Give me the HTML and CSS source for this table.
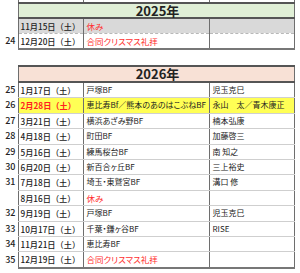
FILE: index.html
```html
<!DOCTYPE html>
<html lang="ja">
<head>
<meta charset="utf-8">
<link rel="stylesheet" href="styles.css">
</head>
<body>
<div class="sheet">
  <table class="t t1">
    <colgroup><col class="cn"><col class="cd"><col class="cp"><col class="cm"></colgroup>
    <tr class="stub"><td class="n"></td><td></td><td></td><td></td></tr>
    <tr class="yr y2025"><td class="n"></td><td colspan="3">2025年</td></tr>
    <tr class="grey"><td class="n"></td><td class="d">11月15日（土）</td><td class="red">休み</td><td></td></tr>
    <tr class="after-dash"><td class="n">24</td><td class="d">12月20日（土）</td><td class="red">合同クリスマス礼拝</td><td></td></tr>
  </table>
  <table class="t t2">
    <colgroup><col class="cn"><col class="cd"><col class="cp"><col class="cm"></colgroup>
    <tr class="yr y2026"><td class="n"></td><td colspan="3">2026年</td></tr>
    <tr><td class="n">25</td><td class="d">1月17日（土）</td><td>戸塚BF</td><td>児玉克巳</td></tr>
    <tr class="hl"><td class="n">26</td><td class="d hot">2月28日（土）</td><td>恵比寿Bf／熊本のあのはこぶねBF</td><td>永山　太／青木康正</td></tr>
    <tr><td class="n">27</td><td class="d">3月21日（土）</td><td>横浜あざみ野BF</td><td>楠本弘康</td></tr>
    <tr><td class="n">28</td><td class="d">4月18日（土）</td><td>町田BF</td><td>加藤啓三</td></tr>
    <tr><td class="n">29</td><td class="d">5月16日（土）</td><td>練馬桜台BF</td><td>南 知之</td></tr>
    <tr><td class="n">30</td><td class="d">6月20日（土）</td><td>新百合ヶ丘BF</td><td>三上裕史</td></tr>
    <tr><td class="n">31</td><td class="d">7月18日（土）</td><td>埼玉・東鷲宮BF</td><td>溝口 修</td></tr>
    <tr><td class="n"></td><td class="d">8月16日（土）</td><td class="red">休み</td><td></td></tr>
    <tr><td class="n">32</td><td class="d">9月19日（土）</td><td>戸塚BF</td><td>児玉克巳</td></tr>
    <tr><td class="n">33</td><td class="d">10月17日（土）</td><td>千葉・鎌ヶ谷BF</td><td>RISE</td></tr>
    <tr><td class="n">34</td><td class="d">11月21日（土）</td><td>恵比寿BF</td><td></td></tr>
    <tr class="last"><td class="n">35</td><td class="d">12月19日（土）</td><td class="red">合同クリスマス礼拝</td><td></td></tr>
  </table>
</div>
</body>
</html>
```

FILE: styles.css
```css
html, body {
  margin: 0;
  padding: 0;
  background: #fff;
}
body {
  font-family: "Noto Sans CJK JP", "Noto Sans", sans-serif;
  color: #222;
  font-size: 8px;
  font-feature-settings: "palt";
}
.sheet {
  display: flex;
  flex-direction: column;
  gap: 15px;
  width: 300px;
}
.t {
  border-collapse: collapse;
  table-layout: fixed;
  width: 294px;
}
col.cn { width: 18px; }
col.cd { width: 65px; }
col.cp { width: 126px; }
col.cm { width: 85px; }
.t td {
  padding: 0 0 0 3px;
  height: 14px;
  line-height: 14px;
  white-space: nowrap;
  overflow: hidden;
  border-top: 1px solid #cfcfcf;
  border-bottom: 1px solid #cfcfcf;
  border-left: 1px solid #6e6e6e;
  border-right: 1px solid #6e6e6e;
  vertical-align: middle;
}
.t td.n {
  border: none;
  text-align: right;
  padding: 0 2px 0 0;
  font-size: 9px;
  font-weight: 500;
}
.t td.d {
  font-weight: 500;
  font-size: 8.2px;
  font-feature-settings: normal;
  padding-left: 2px;
}
.stub td {
  height: 2px;
  line-height: 2px;
  border-top: none;
}
.yr td {
  height: 13px;
  line-height: 13px;
  font-size: 13px;
  font-weight: 700;
  text-align: center;
  overflow: visible;
  border-top: 2px solid #555;
  border-bottom: 2px solid #555;
}
.yr td.n { border: none; }
.y2025 td:not(.n) { background: #e0efd6; }
.y2026 td:not(.n) { background: #f8e1d6; }
.grey td:not(.n) {
  background: #d9d9d9;
  border-bottom: 1px dashed #b8b8b8;
}
.after-dash td:not(.n) {
  border-top: 1px dashed #b8b8b8;
  border-bottom: 2px solid #777;
}
.red { color: #ff3030; font-size: 8.5px; }
.hl td:not(.n) { background: #ffff55; }
.hot { color: #ff2020; font-weight: 700 !important; }
.last td:not(.n) { border-bottom: 2px solid #777; }
.t2 td { height: 14.4px; line-height: 14.4px; }
.t2 .yr td { height: 14px; line-height: 14px; }
```
